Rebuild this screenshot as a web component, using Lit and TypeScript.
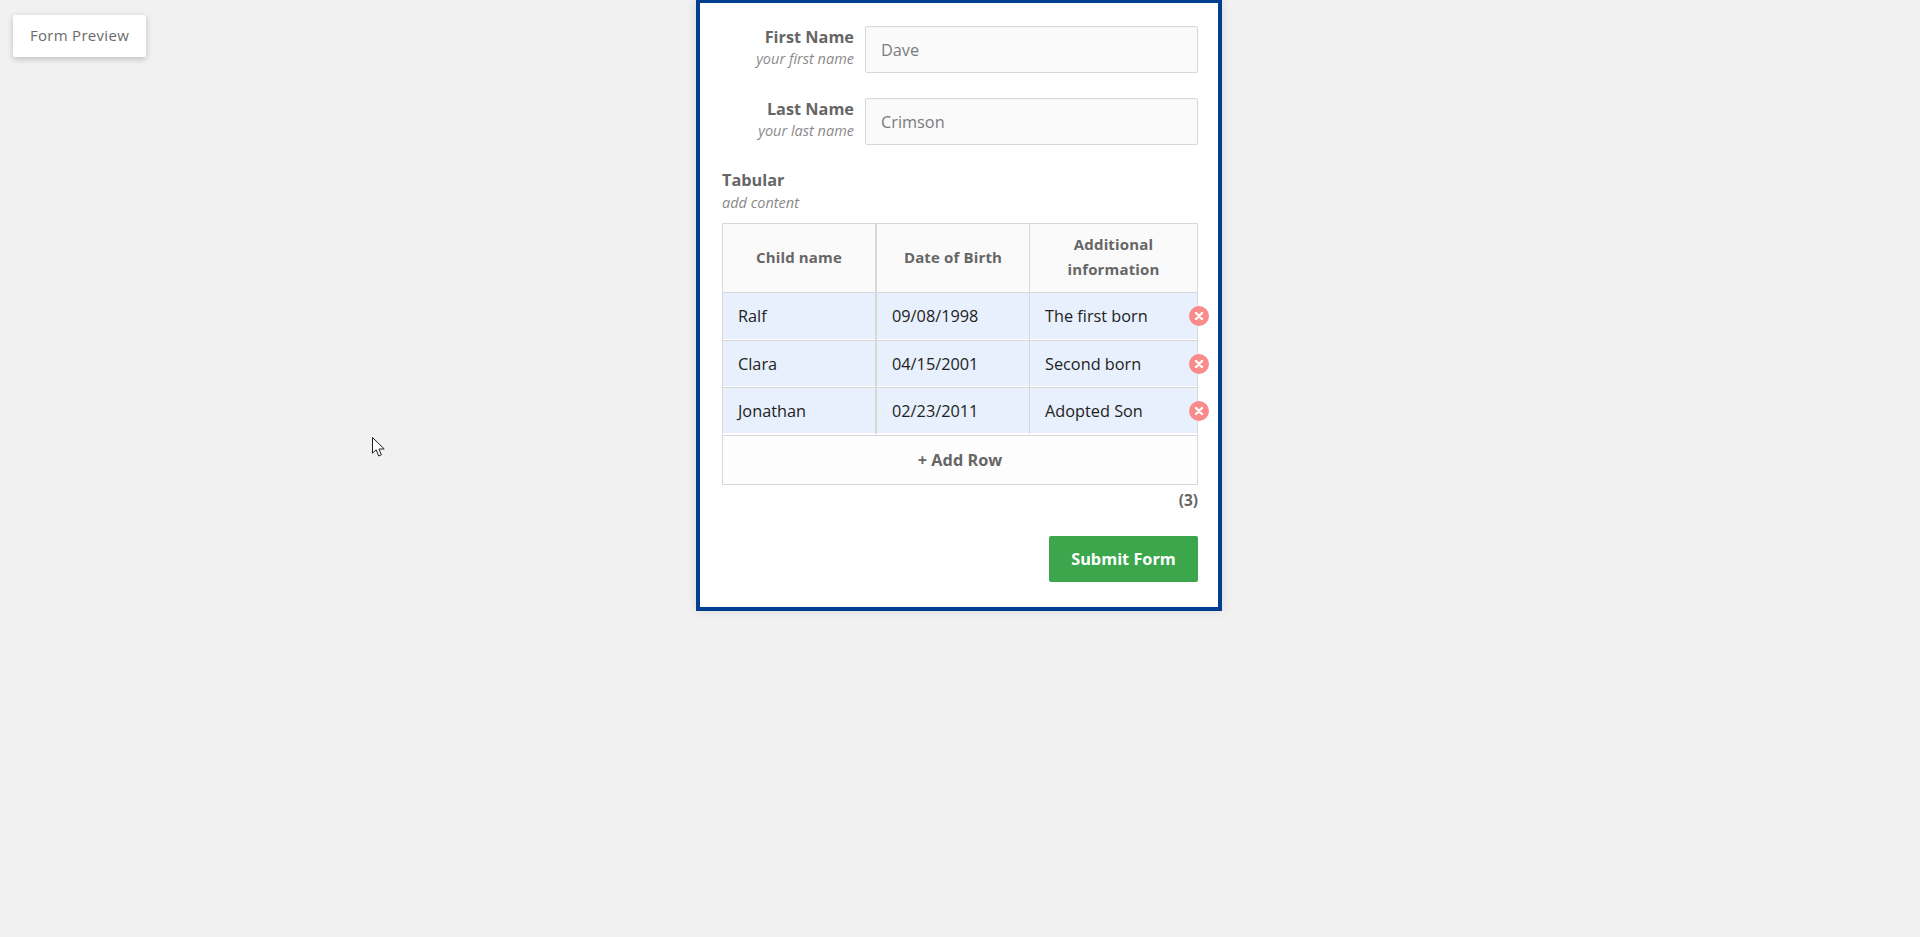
import { LitElement, html, css } from "lit";
import { customElement } from "lit/decorators.js";

const rows = [
  ["Ralf", "09/08/1998", "The first born"],
  ["Clara", "04/15/2001", "Second born"],
  ["Jonathan", "02/23/2011", "Adopted Son"],
];

@customElement("app-root")
export class AppRoot extends LitElement {
  static styles = css`
    :host { display: block; min-height: 937px; background: #f1f1f1; font-family: "Open Sans", sans-serif; position: relative; color: #666; overflow: hidden; }
    .tag { position: absolute; left: 13px; top: 15px; width: 133px; height: 42px; box-sizing: border-box; padding-bottom: 2px; background: #fff; border-radius: 2px; box-shadow: 0 2px 6px rgba(0,0,0,.22); font-size: 15px; letter-spacing: .3px; color: #6b6b6b; display: flex; align-items: center; justify-content: center; }
    .cursor { position: absolute; left: 372px; top: 437px; }
    .frame { box-sizing: border-box; width: 526px; height: 612px; margin: -1px auto 0; transform: translateX(-1px); border: 4px solid #003f8f; background: #fff; padding: 23px 20px 0 22px; box-shadow: 0 0 10px rgba(0,0,0,.1); }
    .field { display: flex; gap: 11px; height: 47px; margin-bottom: 25px; }
    .label { width: 132px; text-align: right; flex: none; }
    .label b { display: block; font-size: 16.3px; line-height: 22px; font-weight: 700; }
    .label i, .sec i { display: block; font-size: 14.5px; line-height: 22px; color: #8a8a8a; font-weight: 400; }
    .input { flex: 1; border: 1px solid #d8d8d8; border-radius: 2px; background: #fafafa; box-sizing: border-box; padding-left: 15px; display: flex; align-items: center; font-size: 16.3px; color: #7b7b7b; }
    .sec { height: 55px; margin-top: -2px; }
    .sec b { display: block; font-size: 16.3px; line-height: 24px; }
    .table { border: 1px solid #d8d8d8; border-width: 1px 1px 0; display: grid; grid-template-columns: 154px 153px 1fr; grid-template-rows: 69px 47px 47px 47px; margin-bottom: 1px; }
    .head { background: #fafafa; box-sizing: border-box; border-bottom: 1px solid #d8d8d8; display: flex; align-items: center; justify-content: center; text-align: center; font-size: 15px; letter-spacing: .15px; font-weight: 700; line-height: 25px; color: #666; padding: 0 20px 2px; }
    .cell { box-sizing: border-box; display: flex; position: relative; }
    .cell.next { border-top: 1px solid #d8d8d8; }
    .inner { flex: 1; background: #e7f0fc; margin-bottom: 1px; display: flex; align-items: center; padding-left: 15px; font-size: 16.3px; color: #222; }
    .c0 { border-right: 2px solid #d8d8d8; }
    .c1 { border-right: 1px solid #d8d8d8; }
    .rm { position: absolute; right: -12px; top: 13px; width: 20px; height: 20px; border-radius: 50%; background: #f98b8b; display: flex; align-items: center; justify-content: center; }
    .add { border: 1px solid #d8d8d8; height: 50px; box-sizing: border-box; background: #fdfdfd; display: flex; align-items: center; justify-content: center; font-size: 16.3px; font-weight: 700; }
    .count { text-align: right; font-size: 15.5px; font-weight: 700; line-height: 20px; margin-top: 5px; }
    .actions { display: flex; justify-content: flex-end; margin-top: 26px; }
    .submit { width: 149px; height: 46px; border-radius: 2px; background: #3ca64c; color: #fff; font-size: 16.3px; font-weight: 700; display: flex; align-items: center; justify-content: center; }
  `;

  render() {
    return html`
      <div class="tag">Form Preview</div>
      <svg class="cursor" width="13" height="20" viewBox="0 0 13 20"><path d="M.5.5v15.6l3.7-3.3 2.5 6.2 2.7-1.2-2.5-5.7 5.3-.2z" fill="#fff" stroke="#222" stroke-width="1"/></svg>
      <div class="frame">
        <div class="field">
          <div class="label"><b>First Name</b><i>your first name</i></div>
          <div class="input">Dave</div>
        </div>
        <div class="field">
          <div class="label"><b>Last Name</b><i>your last name</i></div>
          <div class="input">Crimson</div>
        </div>
        <div class="sec"><b>Tabular</b><i>add content</i></div>
        <div class="table">
          <div class="head c0">Child name</div>
          <div class="head c1">Date of Birth</div>
          <div class="head c2">Additional information</div>
          ${rows.map((r, i) => html`
            <div class="cell c0 ${i ? "next" : ""}"><div class="inner">${r[0]}</div></div>
            <div class="cell c1 ${i ? "next" : ""}"><div class="inner">${r[1]}</div></div>
            <div class="cell c2 ${i ? "next" : ""}"><div class="inner">${r[2]}</div>
              <span class="rm"><svg width="10" height="10" viewBox="0 0 10 10"><path d="M2 2l6 6M8 2l-6 6" stroke="#fff" stroke-width="2.4" stroke-linecap="round"/></svg></span>
            </div>`)}
        </div>
        <div class="add">+ Add Row</div>
        <div class="count">(3)</div>
        <div class="actions"><div class="submit">Submit Form</div></div>
      </div>
    `;
  }
}
